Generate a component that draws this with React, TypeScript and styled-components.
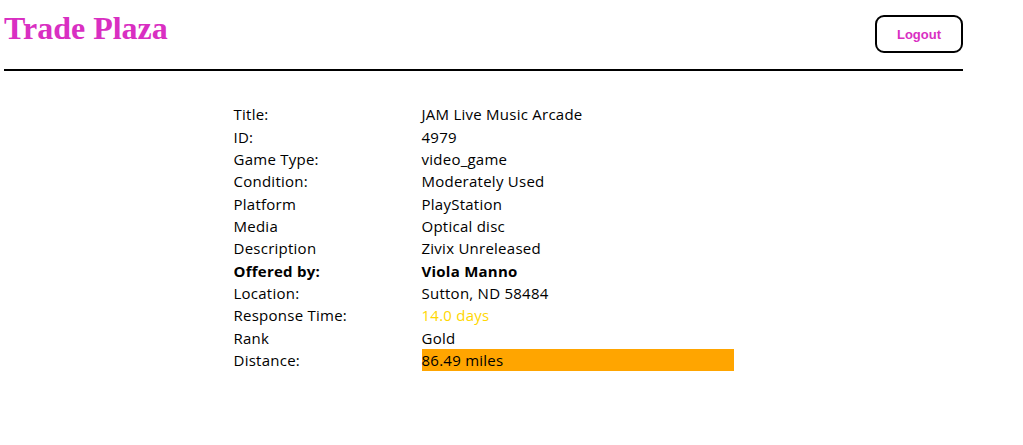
import React from "react";
import styled, { createGlobalStyle } from "styled-components";

const Global = createGlobalStyle`
  html, body { margin: 0; padding: 0; background: #fff; }
  body { font-family: "Open Sans", "Noto Sans", sans-serif; }
`;

const Page = styled.div`
  width: 959px;
  margin-left: 4px;
`;

const Header = styled.header`
  display: flex;
  justify-content: space-between;
  align-items: flex-start;
  height: 71px;
  box-sizing: border-box;
  padding-top: 10px;
  border-bottom: 2px solid #000;
`;

const Brand = styled.h1`
  margin: 0;
  font-family: "Liberation Serif", "Times New Roman", serif;
  font-size: 32px;
  font-weight: bold;
  line-height: 37px;
  color: #d92fc2;
`;

const LogoutButton = styled.button`
  margin-top: 5px;
  width: 88px;
  height: 38px;
  box-sizing: border-box;
  padding-top: 1px;
  border: 2px solid #000;
  border-radius: 9px;
  background: #fff;
  color: #d92fc2;
  font-family: "Liberation Sans", Arial, sans-serif;
  font-weight: bold;
  font-size: 13px;
  cursor: pointer;
`;

const Main = styled.main`
  display: flex;
  justify-content: center;
  padding-top: 32px;
`;

const Details = styled.div`
  display: grid;
  grid-template-columns: 188px 312px;
  grid-auto-rows: 22.36px;
  font-size: 15px;
  letter-spacing: 0.25px;
  color: #000;
`;

const Label = styled.div<{ $bold?: boolean }>`
  display: flex;
  align-items: center;
  font-weight: ${(p) => (p.$bold ? 700 : 400)};
  white-space: nowrap;
`;

const Value = styled.div<{ $bold?: boolean; $color?: string; $bg?: string }>`
  display: flex;
  align-items: center;
  font-weight: ${(p) => (p.$bold ? 700 : 400)};
  color: ${(p) => p.$color || "#000"};
  background: ${(p) => p.$bg || "transparent"};
  white-space: nowrap;
`;

type Row = { label: string; value: string; bold?: boolean; color?: string; bg?: string };

const rows: Row[] = [
  { label: "Title:", value: "JAM Live Music Arcade" },
  { label: "ID:", value: "4979" },
  { label: "Game Type:", value: "video_game" },
  { label: "Condition:", value: "Moderately Used" },
  { label: "Platform", value: "PlayStation" },
  { label: "Media", value: "Optical disc" },
  { label: "Description", value: "Zivix Unreleased" },
  { label: "Offered by:", value: "Viola Manno", bold: true },
  { label: "Location:", value: "Sutton, ND 58484" },
  { label: "Response Time:", value: "14.0 days", color: "#ffd700" },
  { label: "Rank", value: "Gold" },
  { label: "Distance:", value: "86.49 miles", bg: "#ffa500" },
];

export default function App() {
  return (
    <>
      <Global />
      <Page>
        <Header>
          <Brand>Trade Plaza</Brand>
          <LogoutButton>Logout</LogoutButton>
        </Header>
        <Main>
          <Details>
            {rows.map((r) => (
              <React.Fragment key={r.label}>
                <Label $bold={r.bold}>{r.label}</Label>
                <Value $bold={r.bold} $color={r.color} $bg={r.bg}>
                  {r.value}
                </Value>
              </React.Fragment>
            ))}
          </Details>
        </Main>
      </Page>
    </>
  );
}
